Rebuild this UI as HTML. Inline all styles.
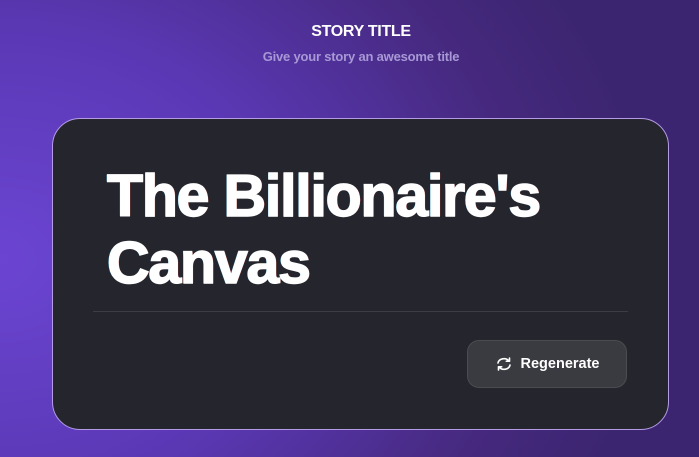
<!DOCTYPE html>
<html><head><style>
*{margin:0;padding:0;box-sizing:border-box}
body{width:699px;height:457px;overflow:hidden;font-family:"Liberation Sans",sans-serif;
background:radial-gradient(ellipse 650px 520px at 0px 260px,#6b45d2 0%,#5a38b4 45%,#46297f 80%,#3c2570 100%);position:relative}
.h{position:absolute;left:0;width:722px;text-align:center}
.t1{top:23px;font-weight:bold;font-size:16px;color:#fff;letter-spacing:-0.3px}
.t2{top:49px;font-size:13px;font-weight:bold;color:#a898d6;letter-spacing:-0.2px}
.card{position:absolute;left:52px;top:118px;width:617px;height:312px;border-radius:28px;background:#25262d;border:1.5px solid #b59ae6}
.title{position:absolute;left:54px;top:44px;font-weight:bold;font-size:59px;line-height:67px;color:#fff;letter-spacing:-1.2px;
-webkit-text-stroke:1.5px #fff;text-shadow:-1px 0 #29a8e0,1px 0 #c0392b}
.div{position:absolute;left:40px;top:192px;width:535px;height:1px;background:#3b3c44}
.btn{position:absolute;left:414px;top:221px;width:160px;height:48px;border-radius:12px;background:#3a3b40;border:1px solid #4b4c52;color:#fff;font-weight:bold;font-size:14.5px;display:flex;align-items:center;justify-content:center;gap:8px}
</style></head><body>
<div class="h t1">STORY TITLE</div>
<div class="h t2">Give your story an awesome title</div>
<div class="card">
<div class="title">The Billionaire's<br>Canvas</div>
<div class="div"></div>
<div class="btn"><svg width="18" height="16" viewBox="0 0 18 16" fill="none" stroke="#fff" stroke-width="1.6" stroke-linecap="round" stroke-linejoin="round"><path d="M3 7a6 5 0 0 1 11-2"/><path d="M14.5 2v3.2h-3.2"/><path d="M15 9a6 5 0 0 1-11 2"/><path d="M3.5 14v-3.2h3.2"/></svg>Regenerate</div>
</div>
</body></html>
